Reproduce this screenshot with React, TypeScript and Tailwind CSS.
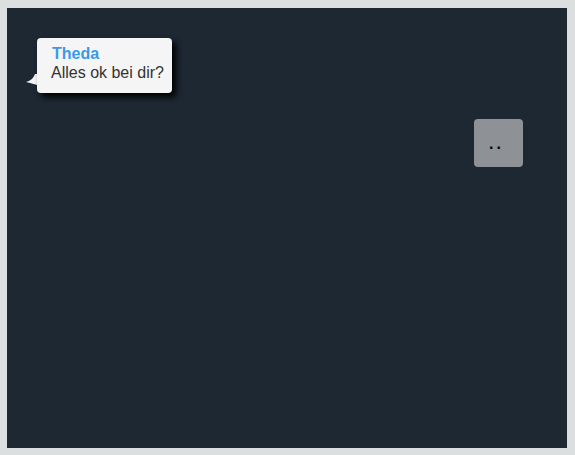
import React from "react";

function Bubble() {
  return (
    <div className="relative ml-[30px] mt-[30px] w-[135px]">
      <svg
        className="absolute left-[-11px] top-[36px]"
        width="14"
        height="12"
        viewBox="0 0 14 12"
      >
        <path d="M14 0 L14 12 C9 10 4 9 0 8 C4 7 7 5 9 0 Z" fill="#f5f5f5" />
      </svg>
      <div className="relative rounded-[4px] bg-[#f5f5f5] pb-[10px] pl-[15px] pr-2 pt-[6px] shadow-[4px_4px_6px_#000]">
        <div className="text-[16px] font-bold leading-[19px] text-[#3a9ae6]">Theda</div>
        <div className="-ml-px text-[16px] leading-[20px] text-[#333]">Alles ok bei dir?</div>
      </div>
    </div>
  );
}

export default function App() {
  return (
    <div
      className="h-[455px] w-[575px] bg-[#dcdfe0] pl-[7px] pt-[8px]"
      style={{ fontFamily: "'Liberation Sans', Arial, sans-serif" }}
    >
      <div className="flex h-[440px] w-[560px] justify-between bg-[#1d2833]">
        <Bubble />
        <div className="mr-[44px] mt-[111px] flex h-[48px] w-[49px] items-center justify-center rounded-[4px] bg-[#8e9297] pr-[4px] pt-[2px] text-[16px] font-bold tracking-[3px] text-black">
          ..
        </div>
      </div>
    </div>
  );
}
